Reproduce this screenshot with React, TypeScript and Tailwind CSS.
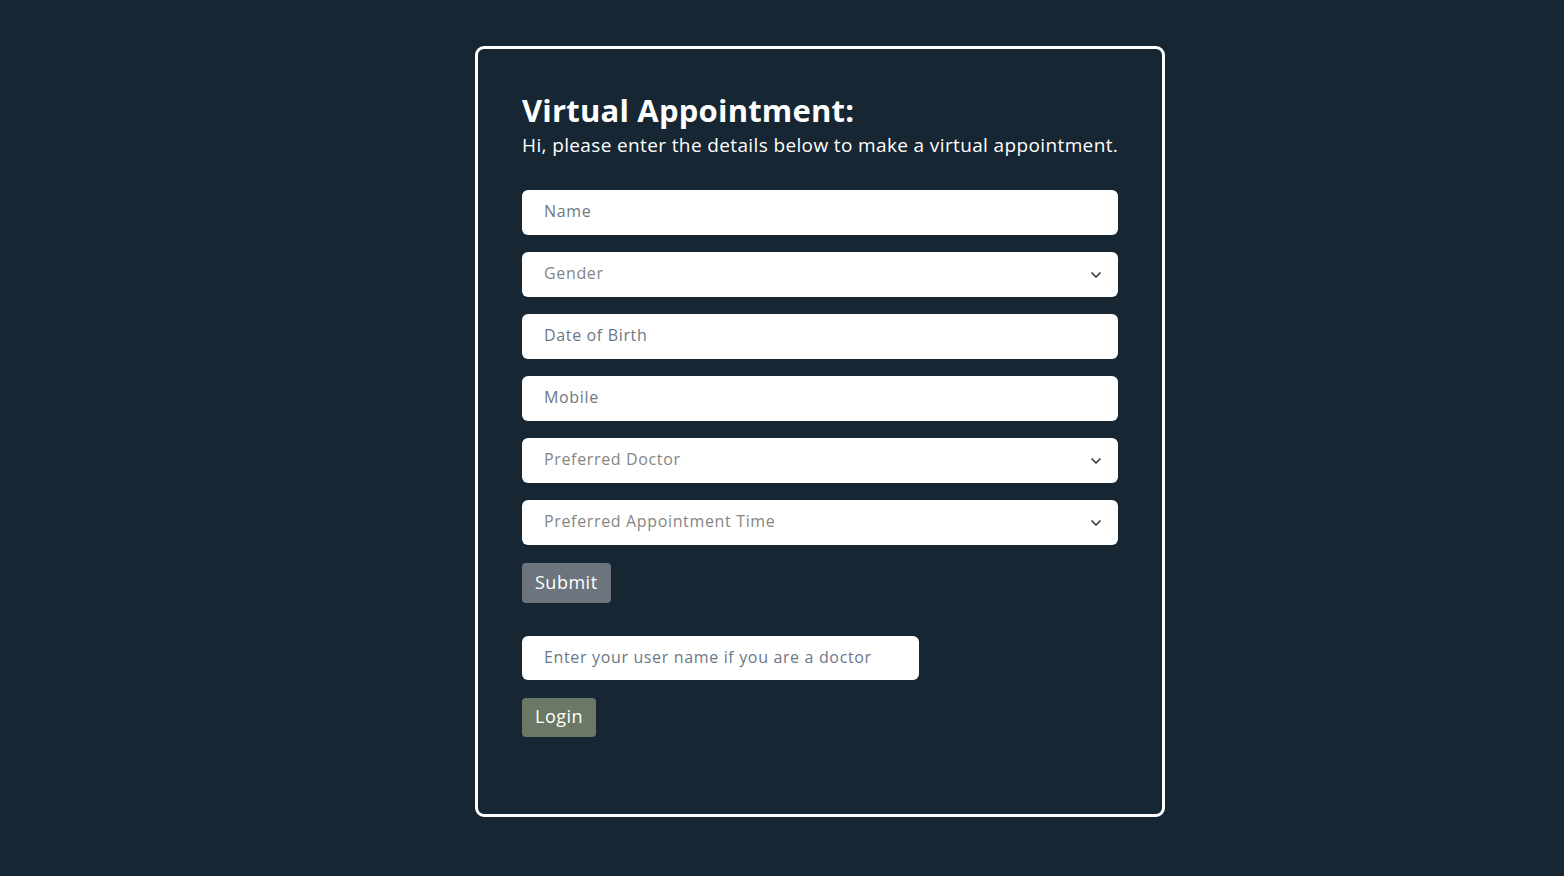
import { ChevronDown } from "lucide-react";

const font = { fontFamily: '"Open Sans", "Noto Sans", sans-serif' };

function Field({ placeholder, select }: { placeholder: string; select?: boolean }) {
  return (
    <div className="relative h-[45px] w-full rounded-[6px] bg-white flex items-center pl-[22px] pr-4 pb-[3px]">
      <span className={select ? "text-[16px] tracking-[0.65px] text-[#858585]" : "text-[16px] tracking-[0.65px] text-[#6c7787]"}>
        {placeholder}
      </span>
      {select && (
        <ChevronDown className="absolute right-[14px] top-1/2 -translate-y-1/2 text-[#343a40]" size={16} strokeWidth={2.5} />
      )}
    </div>
  );
}

export default function App() {
  return (
    <div className="min-h-screen bg-[#172633] pt-[46px] pl-[475px]" style={font}>
      <div className="w-[690px] h-[771px] border-[3px] border-white rounded-[9px] px-[44px] pt-[41px]">
        <h1 className="text-[31px] font-bold text-white leading-[40px] tracking-[0.2px]">Virtual Appointment:</h1>
        <p className="text-[19px] text-white leading-[24px] mt-[3px] tracking-[0.37px] whitespace-nowrap">
          Hi, please enter the details below to make a virtual appointment.
        </p>

        <div className="mt-[33px] flex flex-col gap-[17px]">
          <Field placeholder="Name" />
          <Field placeholder="Gender" select />
          <Field placeholder="Date of Birth" />
          <Field placeholder="Mobile" />
          <Field placeholder="Preferred Doctor" select />
          <Field placeholder="Preferred Appointment Time" select />
        </div>

        <button className="mt-[18px] h-[40px] px-[13px] pb-[2px] rounded-[4px] bg-[#6c757d] text-white text-[18px] tracking-[0.5px]">
          Submit
        </button>

        <div className="mt-[33px] h-[44px] w-[397px] rounded-[6px] bg-white flex items-center pl-[22px] pb-[3px]">
          <span className="text-[16px] tracking-[0.65px] text-[#6c7787]">Enter your user name if you are a doctor</span>
        </div>

        <button className="mt-[18px] h-[39px] px-[13px] pb-[2px] rounded-[4px] bg-[#6b7865] text-white text-[18px] tracking-[0.5px]">
          Login
        </button>
      </div>
    </div>
  );
}
